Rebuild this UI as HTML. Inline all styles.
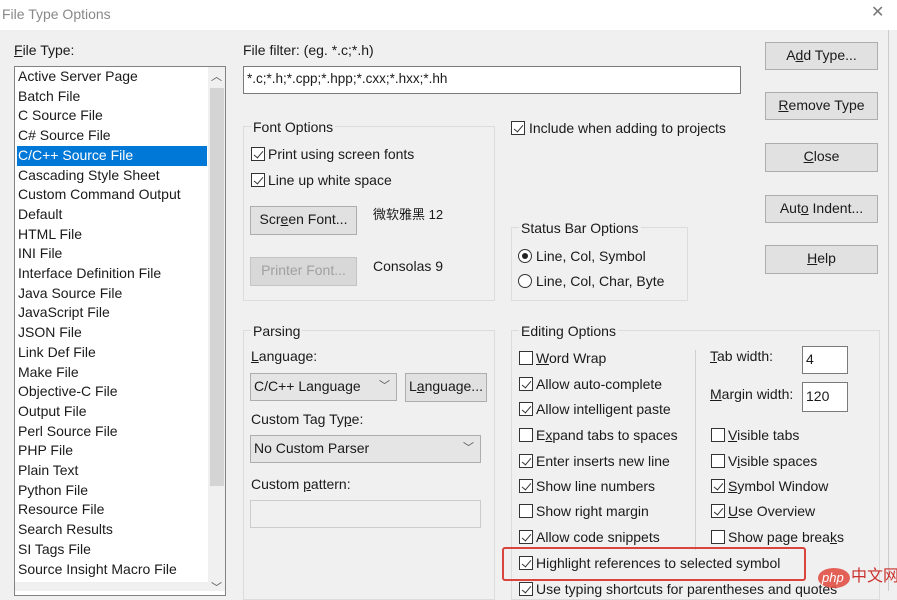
<!DOCTYPE html>
<html><head><meta charset="utf-8"><style>
*{box-sizing:border-box;margin:0;padding:0}
body{width:897px;height:591px;overflow:hidden;background:#f0f0f0;font-family:"Liberation Sans","Noto Sans CJK SC",sans-serif;font-size:14px;color:#1a1a1a;position:relative}
.a{position:absolute;white-space:nowrap;line-height:16px}
.title{position:absolute;left:0;top:0;width:897px;height:30px;background:#fff}
.grp{position:absolute;border:1px solid #dcdcdc}
.gt{position:absolute;background:#f0f0f0;padding:0 2px;line-height:16px}
.btn{position:absolute;border:1px solid #adadad;background:#e1e1e1;text-align:center;line-height:25px}
.inp{position:absolute;border:1px solid #7a7a7a;background:#fff;line-height:24px;padding-left:3px}
.cb{position:absolute;width:14px;height:14px;border:1px solid #333;background:#fff}
.cb.k::after{content:"";position:absolute;left:3.5px;top:0.5px;width:4px;height:8px;border:solid #333;border-width:0 1.6px 1.6px 0;transform:rotate(40deg)}
.rd{position:absolute;width:14px;height:14px;border:1px solid #333;border-radius:50%;background:#fff}
.u{text-decoration:underline}
.li{position:absolute;left:18px;line-height:19.7px;white-space:nowrap}
</style></head><body>
<div class="title"></div>
<div class="a" style="left:2px;top:6px;color:#888;font-size:14px">File Type Options</div>
<div class="a" style="left:871px;top:5px;color:#777;font-size:16px">✕</div>

<div class="a" style="left:14px;top:42px"><span class="u">F</span>ile Type:</div>
<div style="position:absolute;left:14px;top:66px;width:212px;height:530px;background:#fff;border:1px solid #828282"></div>
<div style="position:absolute;left:208px;top:67px;width:17px;height:524px;background:#f0f0f0"></div>
<div style="position:absolute;left:210px;top:88px;width:14px;height:398px;background:#d4d4d4"></div>
<div class="a" style="left:211px;top:69px;font-size:11px;color:#555">︿</div>
<div class="a" style="left:211px;top:580px;font-size:11px;color:#555">﹀</div>
<div style="position:absolute;left:17px;top:146px;width:190px;height:20px;background:#0078d7"></div>
<div style="position:absolute;left:15px;top:67px;width:192px;height:524px;overflow:hidden">
<div style="position:relative;left:-15px;top:-67px">
<div class="li" style="top:67px">Active Server Page</div>
<div class="li" style="top:86.7px">Batch File</div>
<div class="li" style="top:106.4px">C Source File</div>
<div class="li" style="top:126.1px">C# Source File</div>
<div class="li" style="top:145.8px;color:#fff">C/C++ Source File</div>
<div class="li" style="top:165.5px">Cascading Style Sheet</div>
<div class="li" style="top:185.2px">Custom Command Output</div>
<div class="li" style="top:204.9px">Default</div>
<div class="li" style="top:224.6px">HTML File</div>
<div class="li" style="top:244.3px">INI File</div>
<div class="li" style="top:264px">Interface Definition File</div>
<div class="li" style="top:283.7px">Java Source File</div>
<div class="li" style="top:303.4px">JavaScript File</div>
<div class="li" style="top:323.1px">JSON File</div>
<div class="li" style="top:342.8px">Link Def File</div>
<div class="li" style="top:362.5px">Make File</div>
<div class="li" style="top:382.2px">Objective-C File</div>
<div class="li" style="top:401.9px">Output File</div>
<div class="li" style="top:421.6px">Perl Source File</div>
<div class="li" style="top:441.3px">PHP File</div>
<div class="li" style="top:461px">Plain Text</div>
<div class="li" style="top:480.7px">Python File</div>
<div class="li" style="top:500.4px">Resource File</div>
<div class="li" style="top:520.1px">Search Results</div>
<div class="li" style="top:539.8px">SI Tags File</div>
<div class="li" style="top:559.5px">Source Insight Macro File</div>
</div></div>
<div style="position:absolute;left:15px;top:582px;width:193px;height:9px;background:#f0f0f0"></div>

<div class="a" style="left:243px;top:42px">File filter: (eg. *.c;*.h)</div>
<div class="inp" style="left:243px;top:66px;width:498px;height:28px;font-size:13.5px">*.c;*.h;*.cpp;*.hpp;*.cxx;*.hxx;*.hh</div>

<div class="grp" style="left:243px;top:126px;width:252px;height:175px"></div>
<div class="gt" style="left:251px;top:119px">Font Options</div>
<div class="cb k" style="left:251px;top:147px"></div><div class="a" style="left:268px;top:146px">Print using screen fonts</div>
<div class="cb k" style="left:251px;top:173px"></div><div class="a" style="left:268px;top:172px">Line up white space</div>
<div class="btn" style="left:250px;top:206px;width:107px;height:29px">Scr<span class="u">e</span>en Font...</div>
<div class="a" style="left:373px;top:207px;font-size:13px">微软雅黑 12</div>
<div class="btn" style="left:250px;top:257px;width:107px;height:29px;color:#a0a0a0;background:#d8d8d8;border-color:#c4c4c4">Printer Font...</div>
<div class="a" style="left:373px;top:258px">Consolas 9</div>

<div class="cb k" style="left:511px;top:121px"></div><div class="a" style="left:529px;top:120px">Include when adding to projects</div>
<div class="grp" style="left:511px;top:227px;width:177px;height:74px"></div>
<div class="gt" style="left:519px;top:220px">Status Bar Options</div>
<div class="rd" style="left:518px;top:249px"></div><div style="position:absolute;left:522px;top:253px;width:6px;height:6px;border-radius:50%;background:#222"></div>
<div class="a" style="left:536px;top:248px">Line, Col, Symbol</div>
<div class="rd" style="left:518px;top:274px"></div><div class="a" style="left:536px;top:273px">Line, Col, Char, Byte</div>

<div class="grp" style="left:243px;top:330px;width:252px;height:270px"></div>
<div class="gt" style="left:251px;top:323px">Parsing</div>
<div class="a" style="left:251px;top:348px"><span class="u">L</span>anguage:</div>
<div class="inp" style="left:250px;top:373px;width:147px;height:28px;background:#e5e5e5;border-color:#adadad">C/C++ Language<span style="position:absolute;right:6px;font-size:11px;color:#555">﹀</span></div>
<div class="btn" style="left:405px;top:373px;width:82px;height:29px">L<span class="u">a</span>nguage...</div>
<div class="a" style="left:251px;top:411px">Custom Tag Ty<span class="u">p</span>e:</div>
<div class="inp" style="left:250px;top:435px;width:231px;height:28px;background:#e5e5e5;border-color:#adadad">No Custom Parser<span style="position:absolute;right:6px;font-size:11px;color:#555">﹀</span></div>
<div class="a" style="left:251px;top:476px">Custom <span class="u">p</span>attern:</div>
<div class="inp" style="left:250px;top:500px;width:231px;height:28px;background:#f0f0f0;border-color:#ccc"></div>

<div class="grp" style="left:511px;top:330px;width:369px;height:270px"></div>
<div class="gt" style="left:519px;top:323px">Editing Options</div>
<div style="position:absolute;left:695px;top:350px;width:1px;height:200px;background:#d0d0d0"></div>
<div class="cb" style="left:519px;top:351px"></div><div class="a" style="left:536px;top:350px"><span class="u">W</span>ord Wrap</div>
<div class="cb k" style="left:519px;top:377px"></div><div class="a" style="left:536px;top:376px">Allow auto-complete</div>
<div class="cb k" style="left:519px;top:402px"></div><div class="a" style="left:536px;top:401px">Allow intelligent paste</div>
<div class="cb" style="left:519px;top:428px"></div><div class="a" style="left:536px;top:427px">E<span class="u">x</span>pand tabs to spaces</div>
<div class="cb k" style="left:519px;top:454px"></div><div class="a" style="left:536px;top:453px">Enter inserts new line</div>
<div class="cb k" style="left:519px;top:479px"></div><div class="a" style="left:536px;top:478px">Show line numbers</div>
<div class="cb" style="left:519px;top:504px"></div><div class="a" style="left:536px;top:503px">Show right margin</div>
<div class="cb k" style="left:519px;top:530px"></div><div class="a" style="left:536px;top:529px">Allow code snippets</div>
<div class="cb k" style="left:519px;top:556px"></div><div class="a" style="left:536px;top:555px">Highlight references to selected symbol</div>
<div class="cb k" style="left:519px;top:582px"></div><div class="a" style="left:536px;top:581px">Use typing shortcuts for parentheses and quotes</div>
<div style="position:absolute;left:502px;top:547px;width:304px;height:34px;border:2px solid #d9453c;border-radius:3px"></div>

<div class="a" style="left:710px;top:348px"><span class="u">T</span>ab width:</div>
<div class="inp" style="left:802px;top:346px;width:46px;height:28px">4</div>
<div class="a" style="left:710px;top:386px"><span class="u">M</span>argin width:</div>
<div class="inp" style="left:802px;top:382px;width:46px;height:30px;line-height:27px">120</div>
<div class="cb" style="left:711px;top:428px"></div><div class="a" style="left:728px;top:427px"><span class="u">V</span>isible tabs</div>
<div class="cb" style="left:711px;top:454px"></div><div class="a" style="left:728px;top:453px">V<span class="u">i</span>sible spaces</div>
<div class="cb k" style="left:711px;top:479px"></div><div class="a" style="left:728px;top:478px"><span class="u">S</span>ymbol Window</div>
<div class="cb k" style="left:711px;top:504px"></div><div class="a" style="left:728px;top:503px"><span class="u">U</span>se Overview</div>
<div class="cb" style="left:711px;top:530px"></div><div class="a" style="left:728px;top:529px">Show page brea<span class="u">k</span>s</div>

<div class="btn" style="left:765px;top:42px;width:113px;height:28px">A<span class="u">d</span>d Type...</div>
<div class="btn" style="left:765px;top:92px;width:113px;height:28px"><span class="u">R</span>emove Type</div>
<div class="btn" style="left:765px;top:143px;width:113px;height:29px"><span class="u">C</span>lose</div>
<div class="btn" style="left:765px;top:195px;width:113px;height:28px">Aut<span class="u">o</span> Indent...</div>
<div class="btn" style="left:765px;top:245px;width:113px;height:29px"><span class="u">H</span>elp</div>
<div style="position:absolute;left:888px;top:30px;width:1px;height:561px;background:#ccc"></div>

<div style="position:absolute;left:818px;top:568px;width:32px;height:20px;border-radius:50%;background:#e0463c;opacity:.85"></div>
<div class="a" style="left:822px;top:570px;color:#fff;font-size:13px;font-style:italic">php</div>
<div class="a" style="left:851px;top:569px;color:#c9302c;font-size:16px">中文网</div>
</body></html>
